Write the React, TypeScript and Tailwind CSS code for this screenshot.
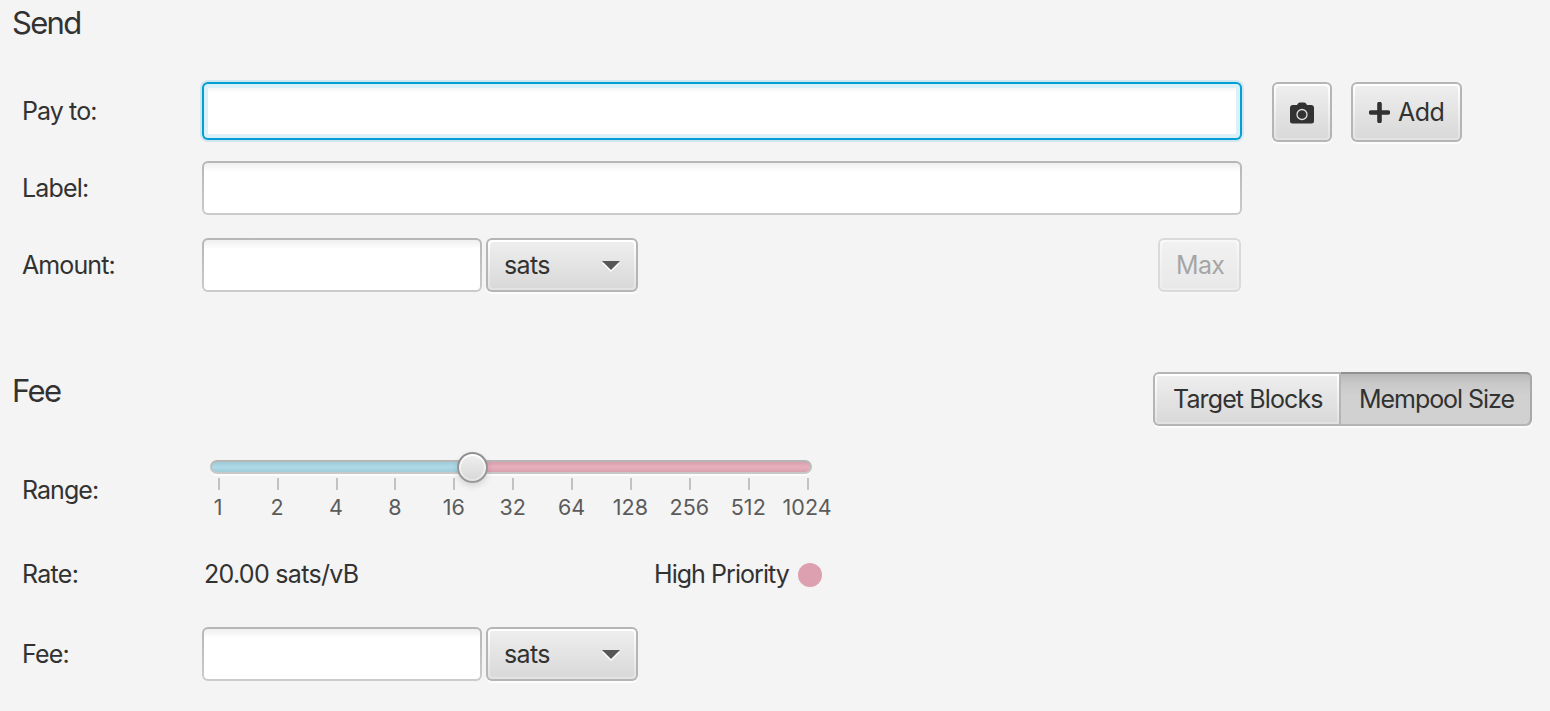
import type { ReactNode } from "react";

function Field({ className }: { className: string }) {
  return (
    <div className={`rounded-[6px] bg-linear-to-b from-[#b6b6b6] to-[#cbcbcb] p-[2px] ${className}`}>
      <input className="block h-full w-full rounded-[4px] bg-white bg-[linear-gradient(to_bottom,#efefef,#ffffff_9px)] px-3 outline-none" />
    </div>
  );
}

function FocusedField({ className }: { className: string }) {
  return (
    <div className={`rounded-[6px] bg-[#039ed3] p-[2px] shadow-[0_0_0_2px_#d0e7f0] ${className}`}>
      <div className="h-full rounded-[4px] bg-[#dbf1f9] p-[4px]">
        <input className="block h-full w-full bg-white bg-[linear-gradient(to_bottom,#f6f6f6,#ffffff_5px)] px-3 outline-none" />
      </div>
    </div>
  );
}

function Button({ className, children }: { className: string; children: ReactNode }) {
  return (
    <button
      className={`flex shrink-0 items-center rounded-[6px] bg-[#b5b5b5] p-[2px] shadow-[0_2px_0_#fcfcfc] ${className}`}
    >
      <span className="flex h-full w-full rounded-[4px] bg-linear-to-b from-white to-[#e2e2e2] p-[2px]">
        <span className="flex h-full w-full items-center rounded-[3px] bg-linear-to-b from-[#eeeeee] to-[#d9d9d9]">
          {children}
        </span>
      </span>
    </button>
  );
}

function UnitSelect() {
  return (
    <Button className="ml-1 h-[54px] w-[152px]">
      <span className="ml-[14px] flex-1 text-left tracking-[-0.6px]">sats</span>
      <svg className="mt-[2px] mr-[13px]" width="20" height="12" viewBox="0 0 20 12">
        <path d="M1 3h18l-9 9z" fill="#fff" />
        <path d="M1 1h18l-9 9z" fill="#575757" />
      </svg>
    </Button>
  );
}

function Label({ children, className }: { children: ReactNode; className: string }) {
  return <span className={`w-[180px] shrink-0 ${className}`}>{children}</span>;
}

const ticks = [1, 2, 4, 8, 16, 32, 64, 128, 256, 512, 1024];

function RangeSlider() {
  return (
    <div className="ml-2 w-[602px] pt-2">
      <div className="relative h-[14px] rounded-full bg-linear-to-b from-[#b4b4b4] to-[#cacaca] p-[2px] shadow-[0_2px_0_#fcfcfc]">
        <div className="flex h-[10px] overflow-hidden rounded-full">
          <div className="w-[260px] bg-linear-to-b from-[#9ecbd9] via-[#aedae8] to-[#a1cddb]" />
          <div className="flex-1 bg-linear-to-b from-[#d89eac] via-[#e7b0be] to-[#dba0ae]" />
        </div>
        <div className="absolute top-[-8px] left-[247px] size-[31px] rounded-full bg-linear-to-b from-[#8e8e8e] to-[#999999] p-[2px] shadow-[0_3px_6px_#00000020]">
          <div className="size-full rounded-full bg-linear-to-b from-white to-[#e5e5e5] p-[2px]">
            <div className="size-full rounded-full bg-linear-to-b from-[#eeeeee] to-[#d9d9d9]" />
          </div>
        </div>
      </div>
      <div className="ml-[-20.7px] flex w-[648px] pt-1">
        {ticks.map((t) => (
          <div key={t} className="flex w-[58.9px] shrink-0 flex-col items-center">
            <div className="h-3 w-[2px] bg-[#c2c2c2]" />
            <div className="mt-1 -ml-px text-[21.5px] leading-[26px] tracking-[0.1px] text-[#5b5b5b]">{t}</div>
          </div>
        ))}
      </div>
    </div>
  );
}

export default function App() {
  return (
    <div className="h-[711px] w-[1550px] overflow-hidden bg-[#f4f4f4] font-['Inter',sans-serif] text-[25px] leading-[30px] whitespace-nowrap text-[#323232]">
      <section className="flex h-[359px] flex-col pl-[22px]">
        <h1 className="-ml-[10px] h-[82px] pt-[4px] text-[31px] leading-[38px] tracking-[-1.7px]">Send</h1>
        <div className="flex h-[79px] items-start">
          <Label className="pt-[14px] tracking-[-0.9px]">Pay to:</Label>
          <FocusedField className="h-[58px] w-[1040px]" />
          <Button className="ml-[30px] h-[60px] w-[60px]">
            <svg className="mt-[2px] ml-[14px]" width="24" height="22" viewBox="0 0 24 22">
              <path d="M7 3 8 1.4Q8.7.5 10 .5h4q1.3 0 2 .9L17 3h4.5Q24 3.3 24 5.500v13.500q0 2.500-2.500 2.500h-19Q0 21.500 0 19V5.500Q0 3.300 2.500 3z" fill="#323232" />
              <circle cx="12" cy="12.500" r="5" fill="none" stroke="#dedede" strokeWidth="1.300" />
            </svg>
          </Button>
          <Button className="ml-[19px] h-[60px] w-[111px]">
            <svg className="mt-px ml-[14px]" width="21" height="21" viewBox="0 0 21 21">
              <path d="M10.500 2v17M2 10.500h17" stroke="#323232" strokeWidth="4.600" strokeLinecap="round" />
            </svg>
            <span className="ml-[8px] tracking-[-0.5px]">Add</span>
          </Button>
        </div>
        <div className="flex h-[77px] items-start">
          <Label className="pt-[12px] tracking-[-0.8px]">Label:</Label>
          <Field className="h-[54px] w-[1040px]" />
        </div>
        <div className="flex h-[54px] items-start">
          <Label className="pt-[12px] tracking-[-0.9px]">Amount:</Label>
          <Field className="h-[54px] w-[280px]" />
          <UnitSelect />
          <Button className="ml-[520px] h-[54px] w-[83px] opacity-40">
            <span className="ml-[14px] tracking-[-0.7px]">Max</span>
          </Button>
        </div>
      </section>
      <section className="pl-[22px]">
        <div className="-ml-[10px] flex h-[93px] justify-between pt-[13px] pr-[18px]">
          <h2 className="text-[31px] leading-[38px] tracking-[-1.6px]">Fee</h2>
          <div className="flex h-[54px] w-[379px] rounded-[6px] bg-[#b5b5b5] p-[2px] shadow-[0_2px_0_#fcfcfc]">
            <button className="w-[184px] rounded-l-[4px] bg-linear-to-b from-white to-[#e2e2e2] p-[2px]">
              <span className="flex h-full items-center bg-linear-to-b from-[#eeeeee] to-[#d9d9d9] pl-[16px] tracking-[-0.88px]">
                Target Blocks
              </span>
            </button>
            <button className="-mt-[2px] -mr-[2px] ml-[2px] flex flex-1 items-center rounded-r-[6px] border-t-2 border-r-2 border-t-[#919191] border-r-[#a8a8a8] bg-[linear-gradient(to_bottom,#b9b9b9,#c9c9c9_10px,#d1d1d1_22px)] pl-[18px] tracking-[-1.05px]">
              Mempool Size
            </button>
          </div>
        </div>
        <div className="flex h-[106px]">
          <Label className="pt-[23px] tracking-[-0.95px]">Range:</Label>
          <RangeSlider />
        </div>
        <div className="flex h-[69px] items-start pt-px">
          <Label className="tracking-[-0.7px]">Rate:</Label>
          <span className="w-[452px] pl-[2px] tracking-[-0.7px]">20.00 sats/vB</span>
          <span className="w-[144px] tracking-[-0.95px]">High Priority</span>
          <span className="mt-[4px] size-6 rounded-full bg-[#dda0b0]" />
        </div>
        <div className="flex items-start">
          <Label className="pt-[12px] tracking-[-0.8px]">Fee:</Label>
          <Field className="h-[54px] w-[280px]" />
          <UnitSelect />
        </div>
      </section>
    </div>
  );
}
